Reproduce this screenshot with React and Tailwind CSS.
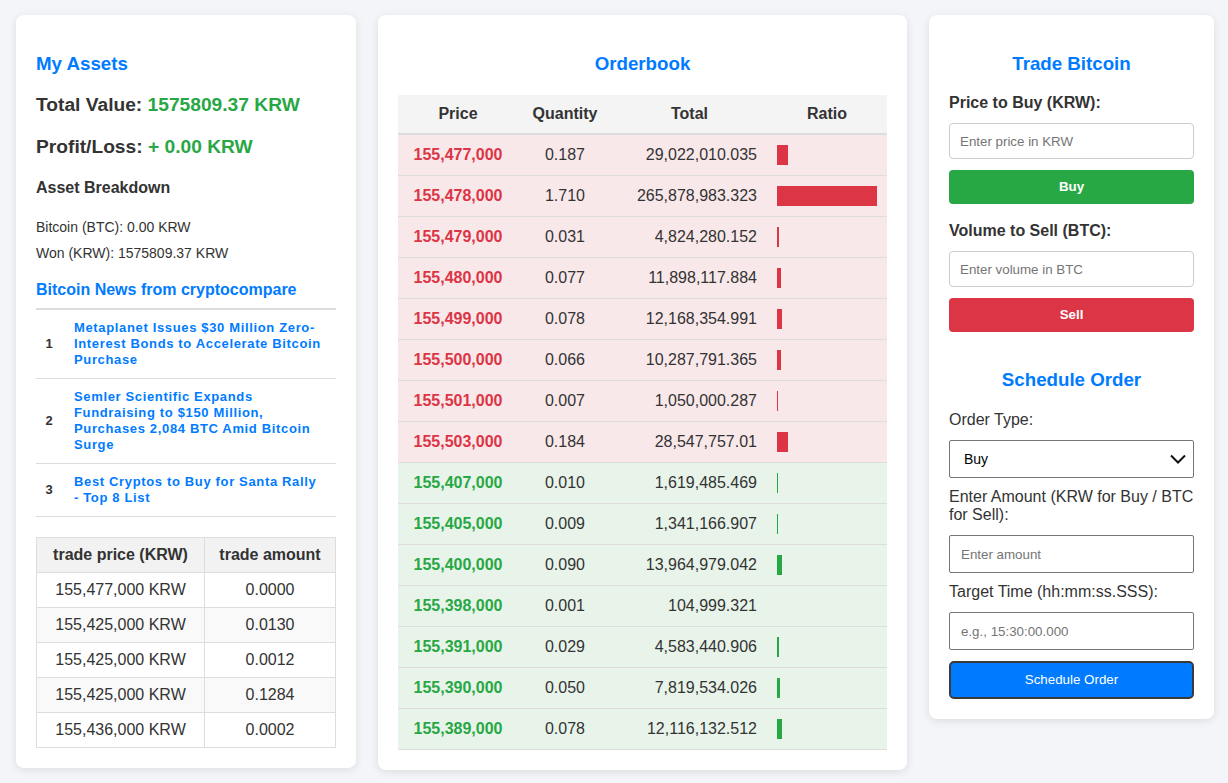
import React from "react";

const asks = [
  ["155,477,000", "0.187", "29,022,010.035", 29022010.035],
  ["155,478,000", "1.710", "265,878,983.323", 265878983.323],
  ["155,479,000", "0.031", "4,824,280.152", 4824280.152],
  ["155,480,000", "0.077", "11,898,117.884", 11898117.884],
  ["155,499,000", "0.078", "12,168,354.991", 12168354.991],
  ["155,500,000", "0.066", "10,287,791.365", 10287791.365],
  ["155,501,000", "0.007", "1,050,000.287", 1050000.287],
  ["155,503,000", "0.184", "28,547,757.01", 28547757.01],
];
const bids = [
  ["155,407,000", "0.010", "1,619,485.469", 1619485.469],
  ["155,405,000", "0.009", "1,341,166.907", 1341166.907],
  ["155,400,000", "0.090", "13,964,979.042", 13964979.042],
  ["155,398,000", "0.001", "104,999.321", 104999.321],
  ["155,391,000", "0.029", "4,583,440.906", 4583440.906],
  ["155,390,000", "0.050", "7,819,534.026", 7819534.026],
  ["155,389,000", "0.078", "12,116,132.512", 12116132.512],
];
const maxTotal = 265878983.323;

const news = [
  "Metaplanet Issues $30 Million Zero-Interest Bonds to Accelerate Bitcoin Purchase",
  "Semler Scientific Expands Fundraising to $150 Million, Purchases 2,084 BTC Amid Bitcoin Surge",
  "Best Cryptos to Buy for Santa Rally - Top 8 List",
];

const trades = [
  ["155,477,000 KRW", "0.0000"],
  ["155,425,000 KRW", "0.0130"],
  ["155,425,000 KRW", "0.0012"],
  ["155,425,000 KRW", "0.1284"],
  ["155,436,000 KRW", "0.0002"],
];

function OrderRow({ row, side }) {
  const isAsk = side === "ask";
  return (
    <tr className={`${isAsk ? "bg-[#f9e8ea]" : "bg-[#e8f4ea]"} border-b border-[#dddddd]`}>
      <td className={`h-[41px] text-center font-bold ${isAsk ? "text-[#dc3545]" : "text-[#28a745]"}`}>{row[0]}</td>
      <td className="h-[41px] text-center">{row[1]}</td>
      <td className="h-[41px] text-right pr-[10px]">{row[2]}</td>
      <td className="h-[41px] pl-[10px]">
        <div
          className={`h-[20px] ${isAsk ? "bg-[#dc3545]" : "bg-[#28a745]"}`}
          style={{ width: `${(row[3] / maxTotal) * 100}px` }}
        />
      </td>
    </tr>
  );
}

export default function App() {
  return (
    <div className="min-h-screen bg-[#f4f5f8] font-['Liberation_Sans',Arial,sans-serif] text-[#333333] flex items-start gap-[22px] pl-4 pt-[15px]">
      {/* Left card */}
      <div className="w-[340px] bg-white rounded-lg shadow-[0_2px_8px_rgba(0,0,0,0.1)] px-5 pt-5 pb-5">
        <h3 className="mt-[18px] text-[18.72px] leading-[22px] font-bold text-[#007bff]">My Assets</h3>
        <p className="mt-[18px] text-[19.2px] leading-[24px] font-bold">
          Total Value: <span className="text-[#28a745]">1575809.37 KRW</span>
        </p>
        <p className="mt-[18px] text-[19.2px] leading-[24px] font-bold">
          Profit/Loss: <span className="text-[#28a745]">+ 0.00 KRW</span>
        </p>
        <h4 className="mt-[20px] text-[16px] leading-[18px] font-bold">Asset Breakdown</h4>
        <p className="mt-[22px] text-[14px] leading-[16px]">Bitcoin (BTC): 0.00 KRW</p>
        <p className="mt-[10px] text-[14px] leading-[16px]">Won (KRW): 1575809.37 KRW</p>
        <h4 className="mt-[20px] text-[16px] leading-[18px] font-bold text-[#007bff]">Bitcoin News from cryptocompare</h4>
        <div className="mt-[9px] border-t-2 border-[#dddddd]">
          {news.map((n, i) => (
            <div key={i} className="flex items-center border-b border-[#dddddd] py-[10px]">
              <div className="w-[26px] text-center text-[13px] font-bold leading-[16px]">{i + 1}</div>
              <div className="ml-[12px] w-[250px] text-[13px] font-bold leading-[16px] tracking-[0.05em] text-[#007bff]">{n}</div>
            </div>
          ))}
        </div>
        <table className="mt-[20px] w-full border-collapse text-[16px] table-fixed">
          <colgroup>
            <col className="w-[168px]" />
            <col />
          </colgroup>
          <thead>
            <tr className="bg-[#f2f2f2]">
              <th className="h-[35px] border border-[#dddddd] font-bold text-center">trade price (KRW)</th>
              <th className="h-[35px] border border-[#dddddd] font-bold text-center">trade amount</th>
            </tr>
          </thead>
          <tbody>
            {trades.map((t, i) => (
              <tr key={i} className={i % 2 === 1 ? "bg-[#f9f9f9]" : "bg-white"}>
                <td className="h-[35px] border border-[#dddddd] text-center">{t[0]}</td>
                <td className="h-[35px] border border-[#dddddd] text-center">{t[1]}</td>
              </tr>
            ))}
          </tbody>
        </table>
      </div>

      {/* Middle card */}
      <div className="w-[529px] bg-white rounded-lg shadow-[0_2px_8px_rgba(0,0,0,0.1)] px-5 pt-5 pb-5">
        <h3 className="mt-[18px] text-center text-[18.72px] leading-[22px] font-bold text-[#007bff]">Orderbook</h3>
        <table className="mt-[20px] w-full border-collapse table-fixed text-[16px]">
          <colgroup>
            <col className="w-[120px]" />
            <col className="w-[94px]" />
            <col className="w-[155px]" />
            <col className="w-[120px]" />
          </colgroup>
          <thead>
            <tr className="bg-[#f4f4f4] border-b-2 border-[#dddddd]">
              <th className="h-[39px] text-center font-bold">Price</th>
              <th className="h-[39px] text-center font-bold">Quantity</th>
              <th className="h-[39px] text-center font-bold">Total</th>
              <th className="h-[39px] text-center font-bold">Ratio</th>
            </tr>
          </thead>
          <tbody>
            {asks.map((r, i) => (
              <OrderRow key={"a" + i} row={r} side="ask" />
            ))}
            {bids.map((r, i) => (
              <OrderRow key={"b" + i} row={r} side="bid" />
            ))}
          </tbody>
        </table>
      </div>

      {/* Right card */}
      <div className="w-[285px] bg-white rounded-lg shadow-[0_2px_8px_rgba(0,0,0,0.1)] px-5 pt-5 pb-5">
        <h3 className="mt-[18px] text-center text-[18.72px] leading-[22px] font-bold text-[#007bff]">Trade Bitcoin</h3>
        <label className="block mt-[19px] text-[16px] leading-[18px] font-bold">Price to Buy (KRW):</label>
        <input
          type="text"
          placeholder="Enter price in KRW"
          className="block mt-[11px] w-full h-[36px] border border-[#cccccc] rounded px-[10px] text-[13.33px] placeholder:text-[#757575] outline-none"
        />
        <button className="block mt-[11px] w-full h-[34px] rounded bg-[#28a745] text-white font-bold text-[13.33px]">Buy</button>
        <label className="block mt-[18px] text-[16px] leading-[18px] font-bold">Volume to Sell (BTC):</label>
        <input
          type="text"
          placeholder="Enter volume in BTC"
          className="block mt-[11px] w-full h-[36px] border border-[#cccccc] rounded px-[10px] text-[13.33px] placeholder:text-[#757575] outline-none"
        />
        <button className="block mt-[11px] w-full h-[34px] rounded bg-[#dc3545] text-white font-bold text-[13.33px]">Sell</button>

        <h3 className="mt-[37px] text-center text-[18.72px] leading-[22px] font-bold text-[#007bff]">Schedule Order</h3>
        <label className="block mt-[20px] text-[16px] leading-[18px]">Order Type:</label>
        <div className="relative mt-[11px]">
          <select className="block w-full h-[38px] appearance-none border border-[#767676] rounded-[2px] bg-white pl-[14px] text-[14px] text-black outline-none">
            <option>Buy</option>
            <option>Sell</option>
          </select>
          <svg
            className="absolute right-[8px] top-[14px] pointer-events-none"
            width="16"
            height="10"
            viewBox="0 0 16 10"
            fill="none"
          >
            <polyline points="1,1.5 8,8.5 15,1.5" stroke="#111" strokeWidth="2" />
          </svg>
        </div>
        <label className="block mt-[10px] text-[16px] leading-[18px]">Enter Amount (KRW for Buy / BTC for Sell):</label>
        <input
          type="text"
          placeholder="Enter amount"
          className="block mt-[11px] w-full h-[38px] border border-[#767676] rounded-[2px] px-[11px] text-[13.33px] placeholder:text-[#757575] outline-none"
        />
        <label className="block mt-[10px] text-[16px] leading-[18px]">Target Time (hh:mm:ss.SSS):</label>
        <input
          type="text"
          placeholder="e.g., 15:30:00.000"
          className="block mt-[11px] w-full h-[38px] border border-[#767676] rounded-[2px] px-[11px] text-[13.33px] placeholder:text-[#757575] outline-none"
        />
        <button className="block mt-[11px] w-full h-[38px] rounded-[5px] border-2 border-[#3a3a3a] bg-[#007bff] text-white text-[13.33px]">
          Schedule Order
        </button>
      </div>
    </div>
  );
}
